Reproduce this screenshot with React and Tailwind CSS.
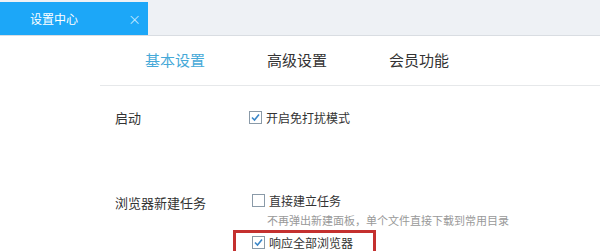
import React from 'react'

const font = { fontFamily: '"Microsoft YaHei", "Noto Sans CJK SC", sans-serif' }

const Check = ({ on }) => (
  <span className="w-[13px] h-[13px] border border-[#8a9aa8] bg-white flex items-center justify-center shrink-0">
    {on && (
      <svg width="11" height="11" viewBox="0 0 11 11">
        <path d="M2 5.5 L4.5 8 L9 2.5" fill="none" stroke="#3a86c8" strokeWidth="1.6" />
      </svg>
    )}
  </span>
)

const App = () => {
  return (
    <div className="w-[600px] h-[251px] bg-white overflow-hidden" style={font}>
      <div className="h-[36px] bg-[#eef1f5] border-b border-[#d9dde2] pt-[2px] flex">
        <div className="w-[148px] h-[33px] bg-[#1ca7f8] flex items-center pl-[30px] pr-[7px] text-white text-[12px]">
          <span className="flex-1">设置中心</span>
          <span className="text-[#bfe6ff] text-[13px]">×</span>
        </div>
      </div>
      <div className="ml-[100px] h-[50px] border-b border-[#e6e8ea] flex items-center text-[15px] text-[#333]">
        <span className="ml-[45px] text-[#46a9d8]">基本设置</span>
        <span className="ml-[62px]">高级设置</span>
        <span className="ml-[62px]">会员功能</span>
      </div>
      <div className="flex pl-[115px] pt-[22px] text-[13px] text-[#333]">
        <div className="w-[134px]">启动</div>
        <label className="flex items-center gap-[4px] text-[12px]">
          <Check on />
          <span>开启免打扰模式</span>
        </label>
      </div>
      <div className="flex pl-[115px] pt-[63px] text-[13px] text-[#333]">
        <div className="w-[137px] pt-[2px]">浏览器新建任务</div>
        <div className="flex flex-col">
          <label className="flex items-center gap-[4px] h-[20px] text-[12px]">
            <Check />
            <span>直接建立任务</span>
          </label>
          <div className="pl-[15px] text-[11px] text-[#999] h-[19px] leading-[19px]">
            不再弹出新建面板，单个文件直接下载到常用目录
          </div>
          <div className="-ml-[19px] w-[143px] h-[30px] border-[3px] border-[#c4302f] pl-[16px] pt-[1px]">
            <label className="flex items-center gap-[4px] text-[12px]">
              <Check on />
              <span>响应全部浏览器</span>
            </label>
          </div>
        </div>
      </div>
    </div>
  )
}

export default App
